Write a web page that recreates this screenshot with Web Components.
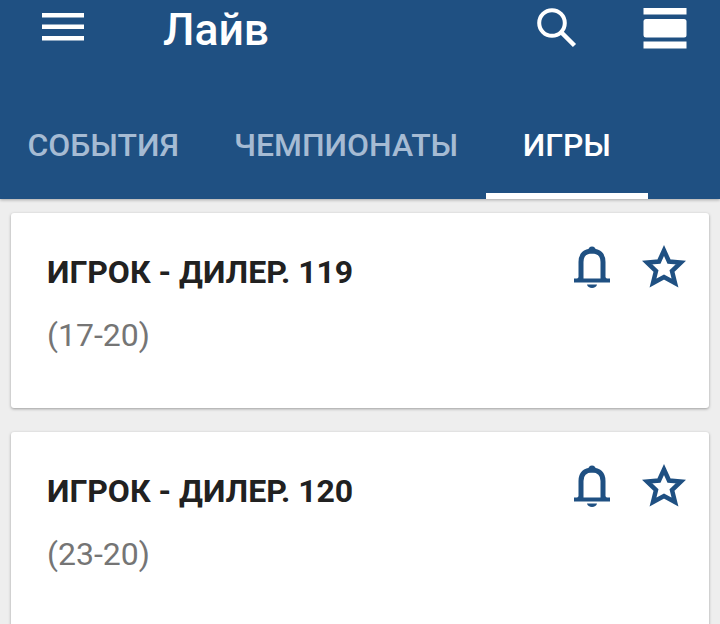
<!DOCTYPE html>
<html><head><meta charset="utf-8"><style>
html,body{margin:0;padding:0;height:624px;overflow:hidden;background:#eeeeee;font-family:Roboto,"Noto Sans",sans-serif}
body{display:flex;flex-direction:column}
</style></head><body>
<live-header title-text="Лайв">
<live-tab>СОБЫТИЯ</live-tab><live-tab>ЧЕМПИОНАТЫ</live-tab><live-tab active>ИГРЫ</live-tab>
</live-header>
<game-list>
<game-card name="ИГРОК - ДИЛЕР. 119" score="(17-20)"></game-card>
<game-card name="ИГРОК - ДИЛЕР. 120" score="(23-20)"></game-card>
</game-list>
<script>
function def(name,html,init){customElements.define(name,class extends HTMLElement{constructor(){super();this.attachShadow({mode:'open'}).innerHTML=html}connectedCallback(){init&&init(this)}})}
def('live-header',`<style>
:host{display:block;flex:none;height:199px;background:#1f5082;color:#fff;box-shadow:0 1px 3px rgba(0,0,0,.3);position:relative;z-index:1}
.bar{height:60px;display:flex;align-items:center}
.menu{width:44px;margin-left:41px;flex:none;display:block;margin-top:-4px}
h1{margin:0 0 0 78px;font:500 44.500px/60px Roboto,sans-serif;flex:1}
.s{width:40px;flex:none;display:block;margin-right:66px;margin-top:-4px}
.v{width:44px;flex:none;display:block;margin-right:33px;margin-top:-3px}
.tabs{display:flex;height:139px;padding-top:0;box-sizing:border-box}
</style>
<div class="bar">
<svg class="menu" width="44" height="30" viewBox="0 0 44 30" fill="#fff"><rect x="1" y="0" width="42" height="4.500"/><rect x="1" y="11.500" width="42" height="4.500"/><rect x="1" y="23" width="42" height="4.500"/></svg>
<h1 id="t"></h1>
<svg class="s" width="40" height="40" viewBox="0 0 40 40" fill="none" stroke="#fff"><circle cx="15" cy="15" r="12.800" stroke-width="4"/><path d="M24.500 24.500L37.500 37.500" stroke-width="4.500"/></svg>
<svg class="v" width="44" height="42" viewBox="0 0 44 42" fill="#fff"><rect width="43" height="6.500" x="0.500" y="0"/><rect x="0.500" y="11" width="43" height="18.500" rx="2.500"/><rect x="0.500" y="33.500" width="43" height="7"/></svg>
</div>
<div class="tabs"><slot></slot></div>`,h=>{h.shadowRoot.getElementById('t').textContent=h.getAttribute('title-text')});
def('live-tab',`<style>
:host{display:flex;align-items:center;justify-content:center;box-sizing:border-box;height:139px;padding:32px 27.500px 0;font:500 31.900px/1 Roboto,sans-serif;color:#a6bbd3;white-space:nowrap}
:host([active]){min-width:162px;color:#fff;box-shadow:inset 0 -6px 0 #fff}
</style><slot></slot>`);
def('game-list',`<style>
:host{display:flex;flex-direction:column;gap:24px;padding:14px 11px 0}
</style><slot></slot>`);
def('game-card',`<style>
:host{display:block;flex:none;box-sizing:border-box;height:195px;background:#fff;border-radius:3px;box-shadow:0 1px 3px rgba(0,0,0,.35);padding:34px 23px 0 36px;color:#212121}
.top{display:flex;align-items:flex-start}
.n{flex:1;font:700 32px/50px Roboto,sans-serif}
.i{display:flex;gap:32px;margin-top:-2px}
.s{font:400 32px/40px Roboto,sans-serif;color:#757575;margin-top:18px}
svg{display:block}
</style>
<div class="top"><div class="n" id="n"></div><div class="i">
<svg width="36" height="44" viewBox="0 -1 36 44" fill="none" stroke="#1f5082" stroke-width="5"><path d="M7 33V16C7 9 11 5 18 5S29 9 29 16V33"/><path d="M0 34.500H36" stroke-width="4"/><path d="M3 33L7 29V35ZM33 33L29 29V35Z" fill="#1f5082" stroke="none"/><circle cx="18" cy="4" r="3.500" fill="#1f5082" stroke="none"/><path d="M13 38.500H23C22.500 43 13.500 43 13 38.500Z" fill="#1f5082" stroke="none"/></svg>
<svg width="44" height="44" viewBox="0 0 44 44" fill="none" stroke="#1f5082" stroke-width="4.500" stroke-linejoin="miter"><path d="M22 5.500L27 16.500L39 17.500L30 26L33 38L22 32L11 38L14 26L5 17.500L17 16.500Z"/></svg>
</div></div>
<div class="s" id="s"></div>`,h=>{h.shadowRoot.getElementById('n').textContent=h.getAttribute('name');h.shadowRoot.getElementById('s').textContent=h.getAttribute('score')});
</script>
</body></html>
